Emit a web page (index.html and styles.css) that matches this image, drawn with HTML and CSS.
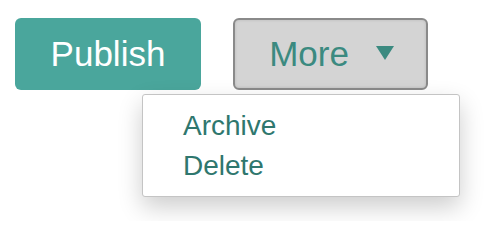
FILE: index.html
```html
<!DOCTYPE html>
<html>
<head>
<meta charset="utf-8">
<link rel="stylesheet" href="styles.css">
</head>
<body>
<div class="page">
  <div class="toolbar">
    <button class="btn btn-primary">Publish</button>
    <div class="dropdown">
      <button class="btn btn-more">More <span class="caret"></span></button>
      <ul class="menu">
        <li>Archive</li>
        <li>Delete</li>
      </ul>
    </div>
  </div>
</div>
</body>
</html>
```
FILE: styles.css
```css
html, body {
  margin: 0;
  padding: 0;
  background: #ffffff;
  font-family: "Liberation Sans", Arial, sans-serif;
}
.page {
  min-height: 221px;
}
.toolbar {
  display: flex;
  align-items: flex-start;
  gap: 32px;
  padding: 18px 0 0 15px;
}
.btn {
  box-sizing: border-box;
  height: 72px;
  font-family: "Liberation Sans", Arial, sans-serif;
  font-size: 35px;
  display: flex;
  align-items: center;
  justify-content: center;
  margin: 0;
  cursor: pointer;
}
.btn-primary {
  width: 186px;
  background: #4aa69c;
  color: #ffffff;
  border: none;
  border-radius: 6px;
  padding: 0;
}
.dropdown {
  position: relative;
}
.btn-more {
  width: 195px;
  background: #d4d4d4;
  color: #3b8a80;
  border: 2px solid #8a8a8a;
  border-radius: 6px;
  box-shadow: inset 0 0 3px rgba(0,0,0,0.14);
  padding: 0 0 0 2px;
  gap: 27px;
}
.caret {
  display: inline-block;
  width: 0;
  height: 0;
  border-left: 9px solid transparent;
  border-right: 9px solid transparent;
  border-top: 14px solid #3b8a80;
  margin-top: -3px;
}
.menu {
  position: absolute;
  z-index: 10;
  left: -91px;
  top: 76px;
  box-sizing: border-box;
  width: 318px;
  margin: 0;
  padding: 11px 0 10px 40px;
  list-style: none;
  background: #ffffff;
  border: 1px solid #c4c4c4;
  border-radius: 3px;
  box-shadow: 0 10px 24px rgba(0,0,0,0.2);
}
.menu li {
  font-size: 28px;
  line-height: 40px;
  color: #2f776e;
}
```
